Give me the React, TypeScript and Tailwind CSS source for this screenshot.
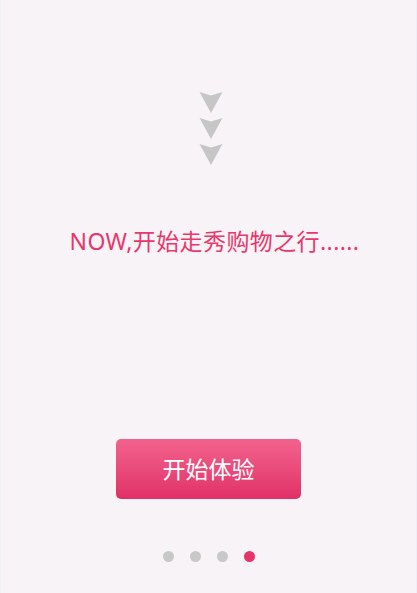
import React from "react";

function Arrow() {
  return (
    <svg width="24" height="21" viewBox="0 0 24 21" className="block">
      <path d="M0.5 0 L12 3.5 L23.5 0 L12 21 Z" fill="#c6c6c6" />
    </svg>
  );
}

export default function App() {
  const dots = [false, false, false, true];
  return (
    <div
      className="w-[417px] h-[593px] bg-[#f8f3f7] flex flex-col items-center border-l border-r border-l-[#eef0f8] border-r-[#eef0f8]"
      style={{ fontFamily: '"Noto Sans", "Noto Sans CJK SC", sans-serif' }}
    >
      <div className="mt-[92px] flex flex-col items-center gap-[5px] ml-[5px]">
        <Arrow />
        <Arrow />
        <Arrow />
      </div>
      <div className="mt-[61px] text-[23px] leading-[30px] tracking-[0.4px] text-[#e8376b] ml-[12px]">
        NOW,开始走秀购物之行......
      </div>
      <button className="mt-[183px] w-[185px] h-[60px] rounded-[5px] bg-gradient-to-b from-[#f2628e] to-[#e02f67] text-white text-[23px] flex items-center justify-center">
        开始体验
      </button>
      <div className="mt-[52px] flex gap-[16px] ml-[0px]">
        {dots.map((a, i) => (
          <div
            key={i}
            className={
              a
                ? "w-[11px] h-[11px] rounded-full bg-[#e8336a]"
                : "w-[11px] h-[11px] rounded-full bg-[#c8c8c8]"
            }
          />
        ))}
      </div>
    </div>
  );
}
